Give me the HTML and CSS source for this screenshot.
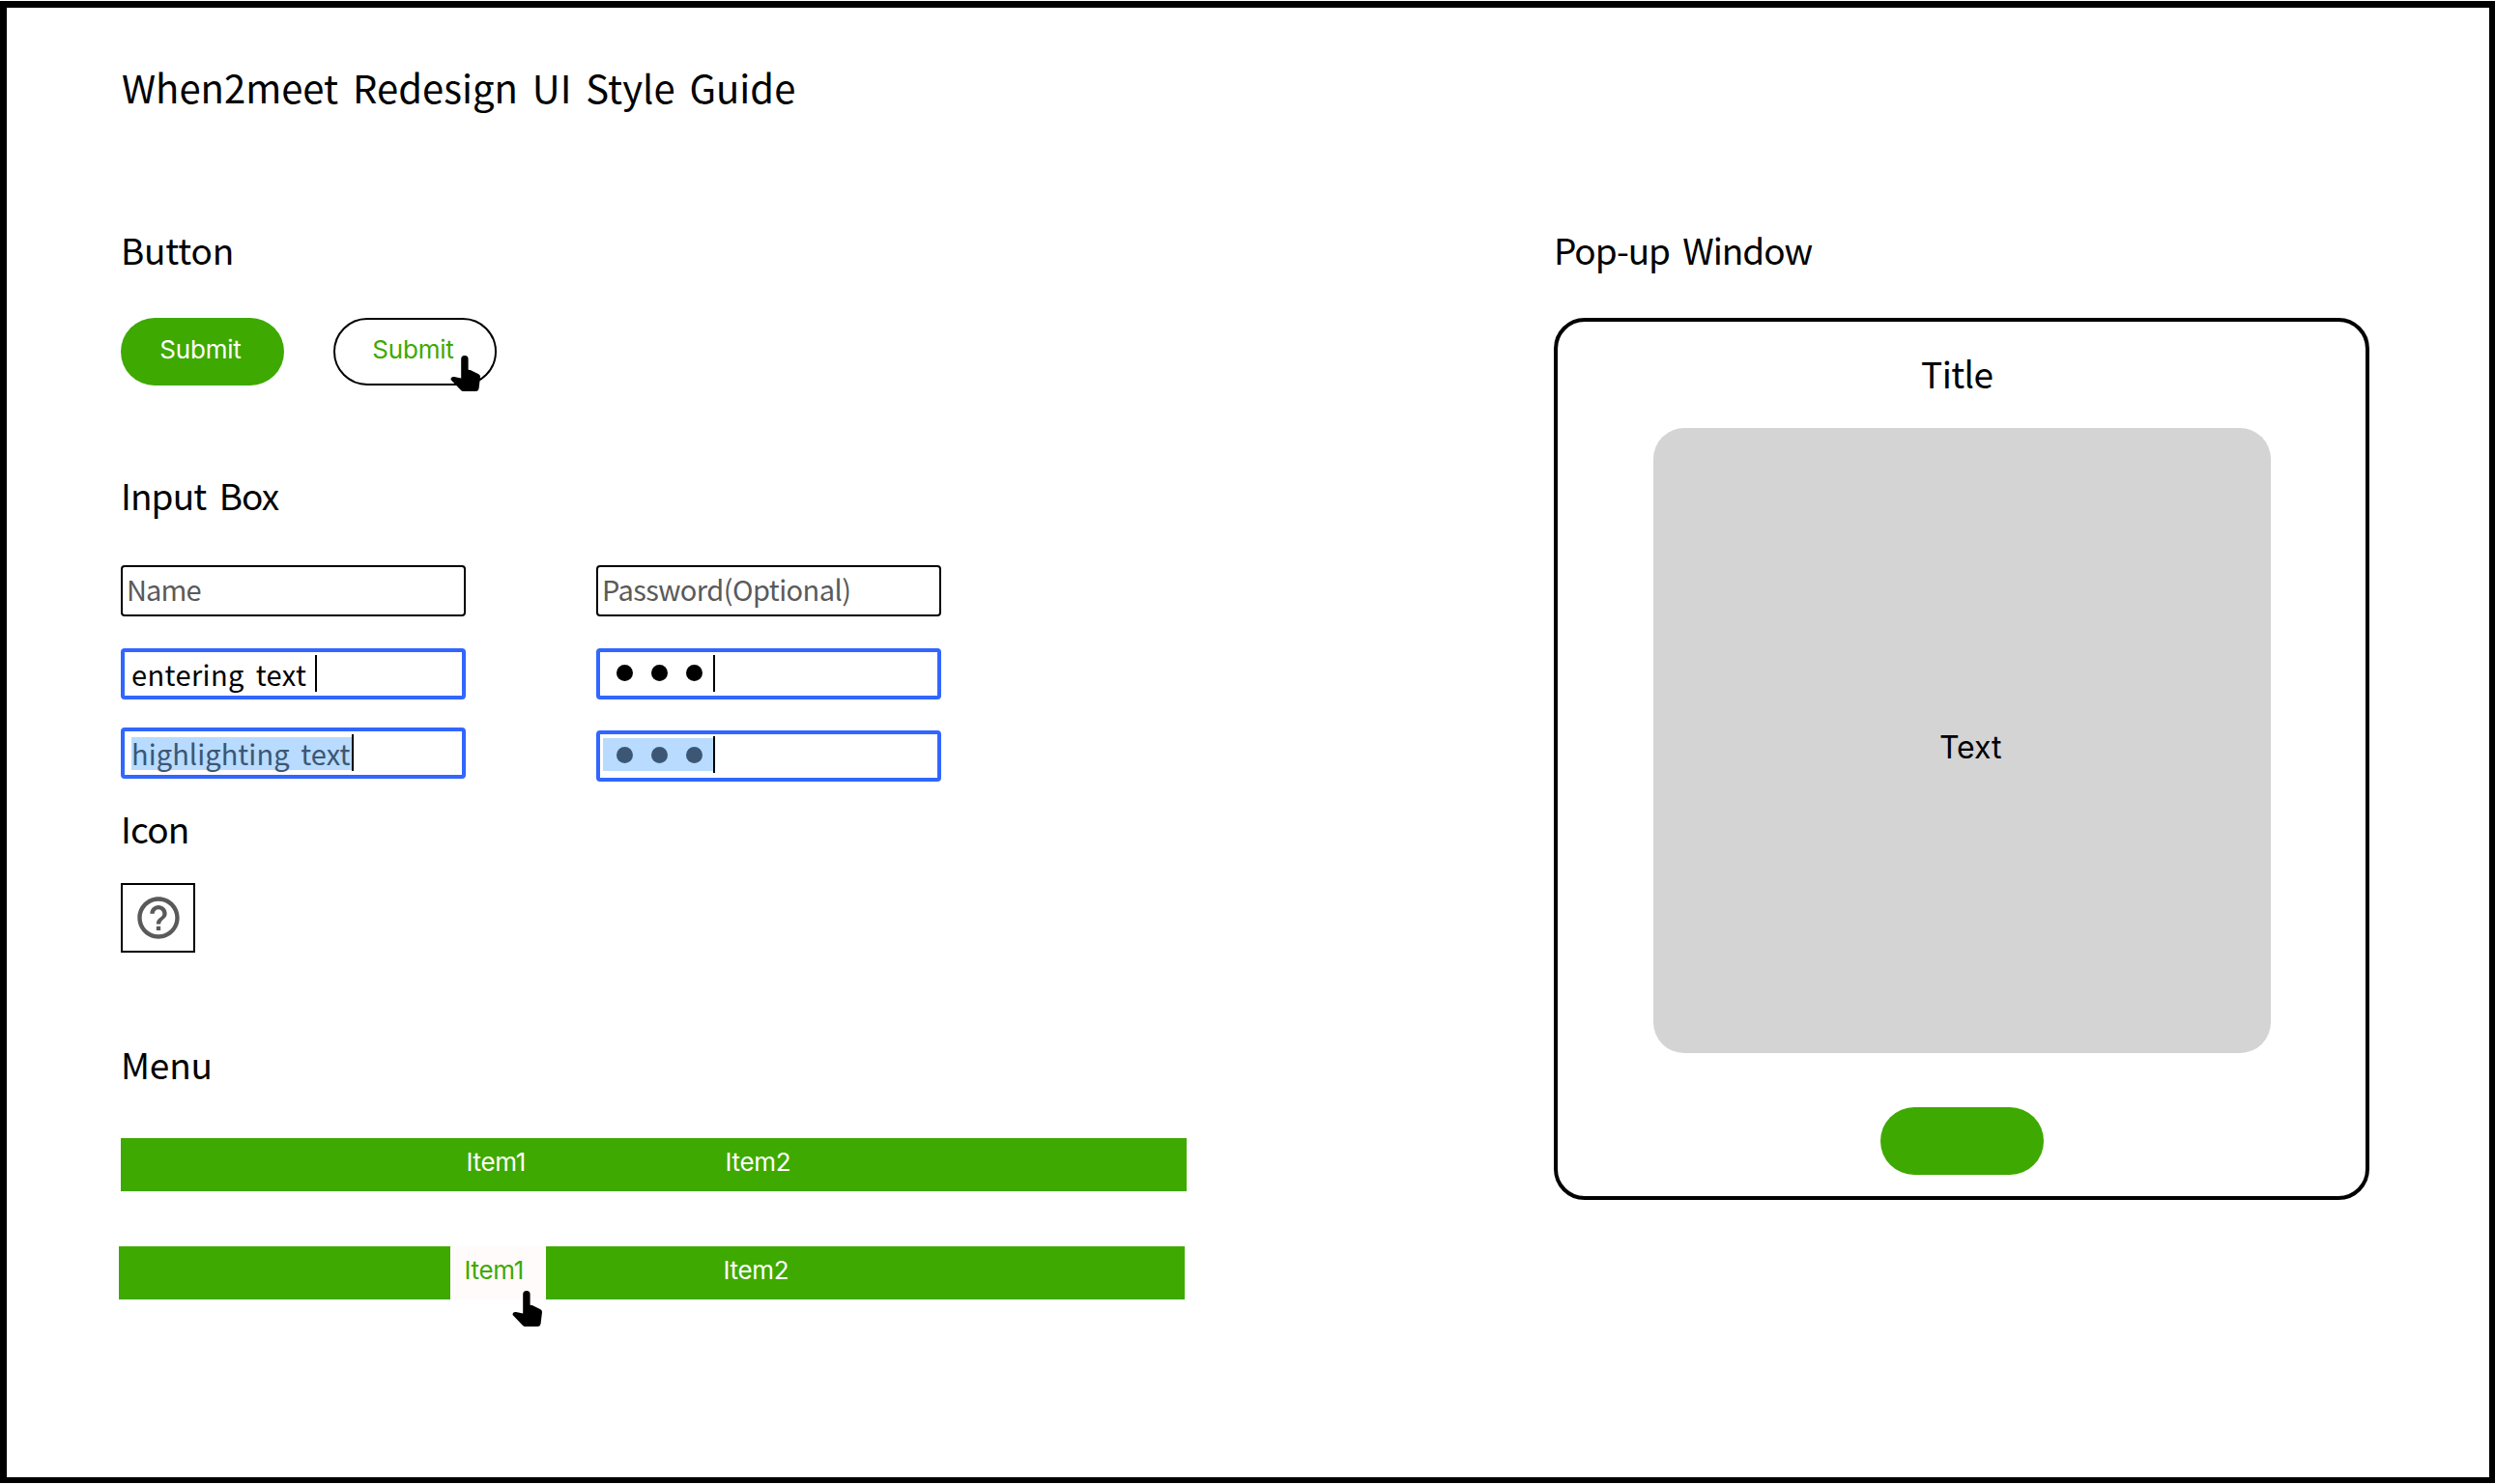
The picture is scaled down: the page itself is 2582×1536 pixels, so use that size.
FILE: index.html
```html
<!DOCTYPE html>
<html lang="en">
<head>
<meta charset="utf-8">
<title>When2meet Redesign UI Style Guide</title>
<link rel="stylesheet" href="styles.css">
</head>
<body>
<svg width="0" height="0" class="defs">
  <symbol id="hand" viewBox="0 0 32 37">
    <path d="M11.2 3.8a3.7 3.7 0 0 1 7.4 0v11l2.2.2 8.600 4.200q1.800 .9 1.600 3l-1.400 11.500q-.5 3.200-3.300 3.200H13.600q-1.600 0-2.800-1.200L.8 25.300Q0 24.200 1 23q1-1.300 3-1l7.200 1.500z"/>
  </symbol>
</svg>
<main class="frame">
  <h1 class="title">When2meet Redesign UI Style Guide</h1>
  <div class="columns">
    <div class="left">
      <section class="buttons">
        <h2 class="w-button">Button</h2>
        <div class="row">
          <button class="pill filled">Submit</button>
          <button class="pill outlined">Submit<svg class="cursor"><use href="#hand"/></svg></button>
        </div>
      </section>
      <section class="inputs">
        <h2 class="w-input">Input Box</h2>
        <div class="fields">
          <div class="col">
            <div class="field"><span class="hint name">Name</span></div>
            <div class="field focus"><span class="entering">entering text</span><i class="caret"></i></div>
            <div class="field focus picked"><span class="mark highlighting">highlighting text</span><i class="caret"></i></div>
          </div>
          <div class="col second">
            <div class="field"><span class="hint password">Password(Optional)</span></div>
            <div class="field focus"><span class="dots"><b></b><b></b><b></b></span><i class="caret"></i></div>
            <div class="field focus picked"><span class="dots mark"><b></b><b></b><b></b></span><i class="caret"></i></div>
          </div>
        </div>
      </section>
      <section class="icons">
        <h2 class="w-icon">Icon</h2>
        <div class="iconbox">
          <svg viewBox="0 0 24 24"><path d="M11 18h2v-2h-2v2zm1-16C6.480 2 2 6.480 2 12s4.480 10 10 10 10-4.480 10-10S17.520 2 12 2zm0 18c-4.410 0-8-3.590-8-8s3.590-8 8-8 8 3.590 8 8-3.590 8-8 8zm0-14c-2.210 0-4 1.790-4 4h2c0-1.100.9-2 2-2s2 .9 2 2c0 2-3 1.750-3 5h2c0-2.250 3-2.500 3-5 0-2.210-1.790-4-4-4z"/></svg>
        </div>
      </section>
      <section class="menus">
        <h2 class="w-menu">Menu</h2>
        <nav class="menu"><span class="item">Item1</span><span class="item">Item2</span></nav>
        <nav class="menu shifted"><span class="item hover">Item1<svg class="cursor"><use href="#hand"/></svg></span><span class="item">Item2</span></nav>
      </section>
    </div>
    <section class="right">
      <h2 class="w-popup">Pop-up Window</h2>
      <div class="popup">
        <h3>Title</h3>
        <div class="body"><span>Text</span></div>
        <button class="pill filled"></button>
      </div>
    </section>
  </div>
</main>
</body>
</html>
```
FILE: styles.css
```css
* { box-sizing: border-box; }
body { margin: 0; background: #fff; }
.defs { display: block; position: absolute; }
.frame {
  width: 2582px; height: 1534px; margin-top: 1px;
  border: solid #000; border-width: 7px 6px 6px 7px;
  background: #fff; color: #000;
  font-family: "Noto Sans CJK SC", sans-serif;
  overflow: hidden;
}
h1, h2, h3 { margin: 0; font-weight: 400; white-space: nowrap; }
h1 { font-size: 40px; line-height: 57px; height: 60px; margin: 54px 0 0 119px; letter-spacing: 0; word-spacing: 6px; }
h2 { font-size: 37px; line-height: 56px; height: 60px; word-spacing: 6px; }
.w-button { letter-spacing: -.2px; }
.w-input { letter-spacing: -.9px; }
.w-icon { letter-spacing: -.8px; }
.w-menu { letter-spacing: -.2px; }
.w-popup { letter-spacing: -1.050px; }
.columns { display: flex; padding-left: 118px; margin-top: 108px; }
.left { width: 1483px; }
button { border: 0; padding: 0; margin: 0; font-family: inherit; }
.row { display: flex; gap: 51px; margin-top: 39px; }
.pill {
  width: 169px; height: 70px; border-radius: 35px; position: relative;
  font: 400 26px/32px Inter, sans-serif; letter-spacing: -.2px; padding: 0 4px 4px 0; text-align: center;
}
.filled { background: #3ea900; color: #fff; }
.outlined { background: #fff; color: #3ea900; border: 2px solid #000; }
.cursor { position: absolute; width: 32px; height: 37px; fill: #000; }
.pill .cursor { left: 119px; top: 37px; }
.inputs { margin-top: 84.500px; }
.fields { display: flex; gap: 135px; margin-top: 41px; }
.col { width: 357px; }
.field {
  height: 53px; border: 2px solid #000; border-radius: 4px;
  display: flex; align-items: center; padding-left: 4px;
  font-size: 29px; line-height: 34px; white-space: nowrap; word-spacing: 5px;
}
.hint { color: #5a5a5a; padding-bottom: 4px; }
.name { letter-spacing: -.9px; }
.password { letter-spacing: -.55px; }
.focus { border: 4px solid #3166ff; margin-top: 33.500px; padding-left: 7px; }
.picked { margin-top: 29px; }
.second .picked { margin-top: 31.500px; }
.caret { width: 2px; height: 38px; background: #000; margin-top: -2px; }
.entering { width: 183px; letter-spacing: .4px; padding-bottom: 2px; }
.entering + .caret { margin-left: 7px; }
.mark { background: #b8dbff; color: #3b5775; height: 34px; line-height: 33px; }
.highlighting { width: 228px; letter-spacing: .08px; }
.second .focus { padding-left: 3px; }
.dots { display: flex; align-items: center; gap: 19px; width: 114px; height: 34px; padding-left: 14px; margin-top: -2px; }
.dots b { width: 17px; height: 17px; border-radius: 50%; background: #000; }
.dots.mark b { background: #3b5775; }
.icons { margin-top: 20.500px; }
.iconbox { width: 77px; height: 72px; border: 2px solid #000; margin-top: 24.500px; display: flex; align-items: center; justify-content: center; }
.iconbox svg { width: 52px; height: 52px; fill: #5a5a5a; }
.menus { margin-top: 87px; }
.menu {
  width: 1103px; height: 55px; background: #3ea900; color: #fff; margin-top: 45px;
  display: flex; gap: 169px; padding-left: 342.500px; font: 400 26px/50px Inter, sans-serif; letter-spacing: -.3px;
}
.item { width: 99px; padding-left: 15px; position: relative; }
.shifted { margin: 57px 0 0 -2px; }
.hover { background: #fffbfb; color: #3ea900; }
.item .cursor { left: 64px; top: 46px; }
.popup {
  width: 843.500px; height: 913px; border: 4px solid #000; border-radius: 32px; margin-top: 39px;
  display: flex; flex-direction: column; align-items: center;
}
.popup .pill { margin-left: 1px; }
h3 { font-size: 37px; line-height: 56px; height: 60px; margin-top: 25px; padding-right: 9px; letter-spacing: -.6px; }
.body {
  width: 639px; height: 647px; border-radius: 32px; background: #d4d4d4; margin: 25px 0 56px 2px;
  display: flex; align-items: center; justify-content: center; font: 400 32px/40px Inter, sans-serif; padding: 15px 0 0 17px;
}
```
